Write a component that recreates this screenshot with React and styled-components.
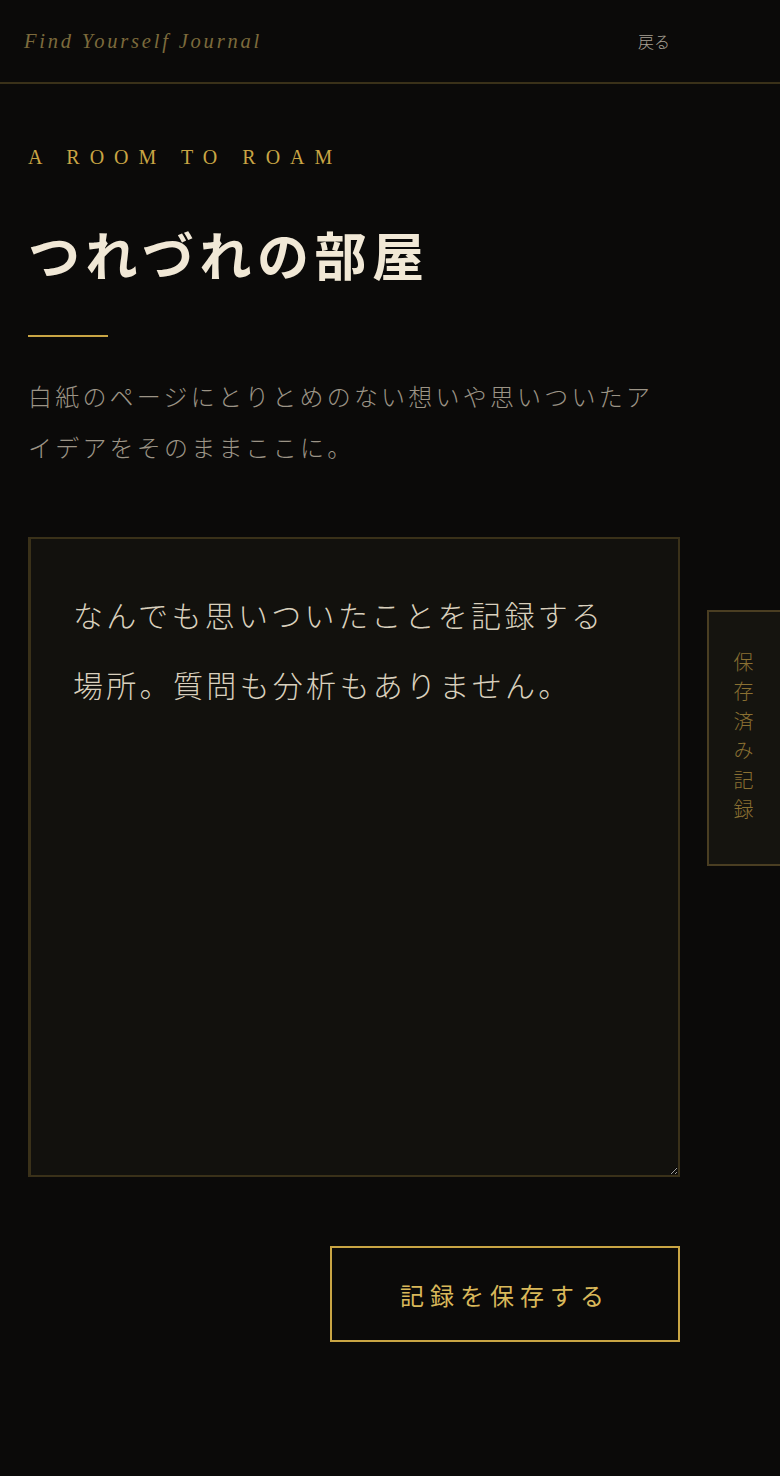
import React, { useState } from 'react'
import styled, { createGlobalStyle } from 'styled-components'

const GlobalStyle = createGlobalStyle`
  html, body {
    margin: 0;
    padding: 0;
    background: #0b0a09;
  }
  body {
    font-family: "Noto Sans CJK JP", "Noto Sans", sans-serif;
    color: #efe6d4;
  }
  * { box-sizing: border-box; }
`;

const Page = styled.div`
  min-height: 1476px;
  background: #0b0a09;
  position: relative;
  overflow: hidden;
`;

const Header = styled.header`
  height: 84px;
  display: flex;
  align-items: center;
  justify-content: space-between;
  padding: 0 110px 0 24px;
  border-bottom: 2px solid #3a3119;
`;

const Logo = styled.div`
  font-family: "Liberation Serif", serif;
  font-style: italic;
  font-size: 20.5px;
  letter-spacing: 2.8px;
  color: #7c6a3c;
`;

const BackLink = styled.a`
  font-size: 16px;
  color: #a8a196;
  text-decoration: none;
  font-weight: 300;
  cursor: pointer;
`;

const Main = styled.main`
  padding: 61px 100px 0 28px;
`;

const Eyebrow = styled.div`
  font-family: "Liberation Serif", serif;
  font-size: 20px;
  letter-spacing: 10px;
  color: #c9a544;
  line-height: 24px;
`;

const Title = styled.h1`
  margin: 40px 0 0;
  font-size: 52px;
  font-weight: 700;
  letter-spacing: 5.5px;
  line-height: 90px;
  color: #f1e8d6;
`;

const Rule = styled.div`
  width: 80px;
  height: 2px;
  background: #c9a544;
  margin-top: 36px;
`;

const Lead = styled.p`
  max-width: 636px;
  margin: 33px 0 0;
  font-size: 24px;
  font-weight: 300;
  letter-spacing: 3.2px;
  line-height: 51px;
  color: #9c9486;
`;

const Editor = styled.textarea`
  display: block;
  width: 652px;
  height: 640px;
  margin-top: 65px;
  padding: 40px 62px 40px 42px;
  background: #12110d;
  border: 2px solid #3a3119;
  border-left-width: 3px;
  color: #d9d0bd;
  font-family: "Noto Sans CJK JP", "Noto Sans", sans-serif;
  font-size: 30px;
  font-weight: 300;
  letter-spacing: 3.3px;
  line-height: 70px;
  resize: vertical;
  outline: none;
`;

const Actions = styled.div`
  width: 652px;
  display: flex;
  justify-content: flex-end;
  margin-top: 69px;
`;

const SaveButton = styled.button`
  width: 350px;
  height: 96px;
  background: transparent;
  border: 2px solid #c9a544;
  color: #d9b85a;
  font-family: "Noto Sans CJK JP", "Noto Sans", sans-serif;
  font-size: 24px;
  font-weight: 400;
  letter-spacing: 6px;
  cursor: pointer;
`;

const SideTab = styled.button`
  position: absolute;
  top: 610px;
  right: -12px;
  width: 85px;
  height: 256px;
  padding: 40px 12px 0 0;
  background: #15140f;
  border: 2px solid #4a3e22;
  color: #8a7032;
  writing-mode: vertical-rl;
  display: flex;
  align-items: center;
  justify-content: flex-start;
  font-family: "Noto Sans CJK JP", "Noto Sans", sans-serif;
  font-size: 20px;
  font-weight: 300;
  letter-spacing: 9.5px;
  cursor: pointer;
`;

const App = () => {
  const [text, setText] = useState('なんでも思いついたことを記録する場所。質問も分析もありません。');

  return (
    <>
      <GlobalStyle />
      <Page>
        <Header>
          <Logo>Find Yourself Journal</Logo>
          <BackLink>戻る</BackLink>
        </Header>
        <Main>
          <Eyebrow>A ROOM TO ROAM</Eyebrow>
          <Title>つれづれの部屋</Title>
          <Rule />
          <Lead>白紙のページにとりとめのない想いや思いついたアイデアをそのままここに。</Lead>
          <Editor value={text} onChange={(e) => setText(e.target.value)} />
          <Actions>
            <SaveButton>記録を保存する</SaveButton>
          </Actions>
        </Main>
        <SideTab>保存済み記録</SideTab>
      </Page>
    </>
  )
}

export default App
